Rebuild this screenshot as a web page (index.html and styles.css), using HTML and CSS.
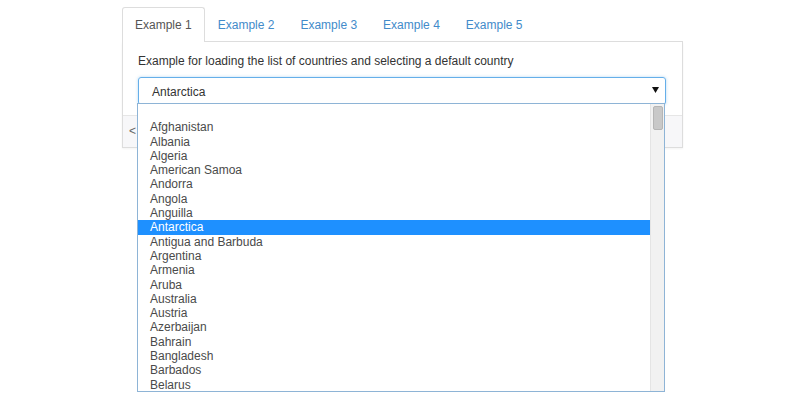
FILE: index.html
```html
<!DOCTYPE html>
<html>
<head>
<meta charset="utf-8">
<link rel="stylesheet" href="styles.css">
</head>
<body>
<div class="wrap">
  <ul class="tabs">
    <li class="tab active">Example 1</li>
    <li class="tab">Example 2</li>
    <li class="tab">Example 3</li>
    <li class="tab">Example 4</li>
    <li class="tab">Example 5</li>
  </ul>
  <div class="panel">
    <div class="body">
      <div class="label">Example for loading the list of countries and selecting a default country</div>
      <div class="select-wrap">
        <div class="select">
          <span>Antarctica</span>
          <svg class="arrow" width="7" height="6" viewBox="0 0 7 6"><path d="M0 0H7L3.5 6Z" fill="#111"/></svg>
        </div>
        <div class="dropdown">
          <div class="options">
            <div class="opt">&nbsp;</div>
            <div class="opt">Afghanistan</div>
            <div class="opt">Albania</div>
            <div class="opt">Algeria</div>
            <div class="opt">American Samoa</div>
            <div class="opt">Andorra</div>
            <div class="opt">Angola</div>
            <div class="opt">Anguilla</div>
            <div class="opt sel">Antarctica</div>
            <div class="opt">Antigua and Barbuda</div>
            <div class="opt">Argentina</div>
            <div class="opt">Armenia</div>
            <div class="opt">Aruba</div>
            <div class="opt">Australia</div>
            <div class="opt">Austria</div>
            <div class="opt">Azerbaijan</div>
            <div class="opt">Bahrain</div>
            <div class="opt">Bangladesh</div>
            <div class="opt">Barbados</div>
            <div class="opt">Belarus</div>
          </div>
          <div class="scrollbar"><div class="thumb"></div></div>
        </div>
      </div>
    </div>
    <div class="footer">&lt;</div>
  </div>
</div>
</body>
</html>
```
FILE: styles.css
```css
html, body { margin: 0; padding: 0; background: #fff; min-height: 400px; }
body { font-family: "Liberation Sans", Arial, sans-serif; font-size: 12px; color: #333; }
.wrap { margin: 0 0 0 122px; padding-top: 7px; width: 561px; }
.tabs { list-style: none; margin: 0; padding: 0; display: flex; border-bottom: 1px solid #ddd; height: 34px; }
.tab { padding: 0 12px; line-height: 34px; color: #428bca; margin-bottom: -1px; border: 1px solid transparent; border-bottom: none; white-space: nowrap; }
.tab.active { color: #555; background: #fff; border-color: #ddd; border-radius: 3px 3px 0 0; height: 34px; }
.panel { border: 1px solid #ddd; border-top: none; box-shadow: 0 1px 2px rgba(0,0,0,0.05); }
.body { padding: 12px 16px 10px 15px; }
.label { line-height: 14px; height: 14px; margin-bottom: 9px; white-space: nowrap; }
.select-wrap { position: relative; }
.select { height: 26px; border: 1px solid #66afe9; border-radius: 3px; display: flex; align-items: center; justify-content: space-between; padding: 0 6px 0 13px; box-shadow: 0 0 3px rgba(102,175,233,0.5); color: #333; }
.select span { margin-top: 1px; }
.arrow { display: block; margin-top: -2px; }
.dropdown { position: absolute; left: -1px; top: 26px; width: 526px; height: 287px; border: 1px solid #8eb4d6; background: #fff; display: flex; overflow: hidden; z-index: 2; }
.options { flex: 1; padding-top: 2px; }
.opt { height: 14.3px; line-height: 14.3px; padding-left: 12px; color: #4a4a4a; white-space: nowrap; }
.opt.sel { background: #1e90ff; color: #fff; }
.scrollbar { width: 13px; background: #f1f1f1; border-left: 1px solid #e4e4e4; position: relative; }
.thumb { position: absolute; left: 2px; top: 2px; width: 8px; height: 22px; background: #c8c8c8; border: 1px solid #b5b5b5; border-radius: 2px; }
.footer { height: 31px; background: #f7f7f9; border-top: 1px solid #e6e6e6; padding-left: 6px; line-height: 31px; color: #666; white-space: nowrap; overflow: hidden; }
```
